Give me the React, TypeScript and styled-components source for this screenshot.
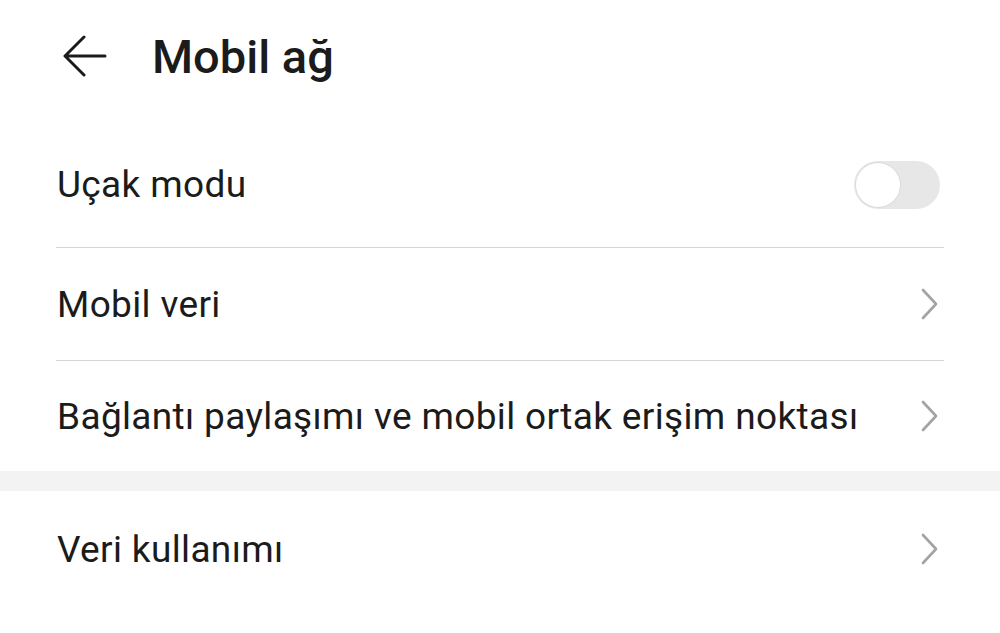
import React from 'react';
import styled, { createGlobalStyle } from 'styled-components';

const GlobalStyle = createGlobalStyle`
  html, body {
    margin: 0;
    padding: 0;
    background: #ffffff;
  }
  body {
    font-family: Roboto, "Noto Sans", "Liberation Sans", sans-serif;
    color: #1b1b1b;
  }
`;

const Page = styled.div`
  width: 1000px;
  height: 633px;
  background: #ffffff;
  overflow: hidden;
`;

const Header = styled.header`
  height: 128px;
  display: flex;
  align-items: center;
  padding: 0 0 16px 62px;
  box-sizing: border-box;
  gap: 44px;
`;

const BackButton = styled.button`
  width: 46px;
  height: 46px;
  padding: 0;
  border: none;
  background: transparent;
  display: flex;
  align-items: center;
  justify-content: center;
  color: #1b1b1b;
`;

const Title = styled.h1`
  margin: 0;
  font-size: 47px;
  font-weight: 500;
  letter-spacing: 0;
  color: #1b1b1b;
`;

const Group = styled.section`
  padding: 0 56px;
`;

const Row = styled.div<{ $divider?: boolean; $height: number; $shift?: number }>`
  height: ${(p) => p.$height}px;
  box-sizing: content-box;
  padding-bottom: ${(p) => p.$shift ?? 0}px;
  display: flex;
  align-items: center;
  justify-content: space-between;
  border-bottom: ${(p) => (p.$divider ? '1px solid #d4d4d4' : 'none')};
`;

const Label = styled.span`
  font-size: 37px;
  font-weight: 400;
  letter-spacing: 0.35px;
  color: #1b1b1b;
  padding-left: 1px;
`;

const Gap = styled.div`
  height: 20px;
  background: #f3f3f3;
`;

const Track = styled.div`
  width: 86px;
  height: 48px;
  border-radius: 24px;
  background: #e7e7e7;
  display: flex;
  align-items: center;
  padding: 2px;
  box-sizing: border-box;
  margin-right: 4px;
`;

const Thumb = styled.div`
  width: 44px;
  height: 44px;
  border-radius: 50%;
  background: #ffffff;
  box-shadow: 0 0 0 1px #dcdcdc;
`;

const ChevronBox = styled.span`
  display: flex;
  align-items: center;
  margin-right: 5px;
`;

const BackArrow = () => (
  <svg width="44" height="42" viewBox="0 0 44 42" fill="none">
    <path d="M42 21H3M21 2L2 21L21 40" stroke="#1b1b1b" strokeWidth="3" strokeLinecap="round" strokeLinejoin="round" />
  </svg>
);

const Chevron = () => (
  <ChevronBox>
    <svg width="18" height="32" viewBox="0 0 18 32" fill="none">
      <path d="M2 2L15 16L2 30" stroke="#a3a3a3" strokeWidth="2.6" strokeLinecap="round" strokeLinejoin="round" />
    </svg>
  </ChevronBox>
);

export default function App() {
  return (
    <Page>
      <GlobalStyle />
      <Header>
        <BackButton aria-label="Geri">
          <BackArrow />
        </BackButton>
        <Title>Mobil ağ</Title>
      </Header>
      <Group>
        <Row $divider $height={113} $shift={6}>
          <Label>Uçak modu</Label>
          <Track>
            <Thumb />
          </Track>
        </Row>
        <Row $divider $height={112}>
          <Label>Mobil veri</Label>
          <Chevron />
        </Row>
        <Row $height={110}>
          <Label>Bağlantı paylaşımı ve mobil ortak erişim noktası</Label>
          <Chevron />
        </Row>
      </Group>
      <Gap />
      <Group>
        <Row $height={116}>
          <Label>Veri kullanımı</Label>
          <Chevron />
        </Row>
      </Group>
    </Page>
  );
}
